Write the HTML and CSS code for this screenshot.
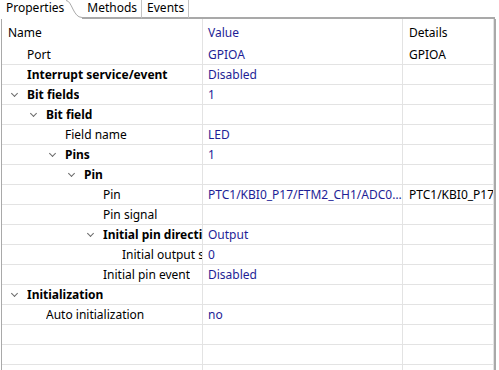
FILE: index.html
```html
<!DOCTYPE html>
<html>
<head>
<meta charset="utf-8">
<link rel="stylesheet" href="styles.css">
</head>
<body>
<div class="tabs">
  <div class="tab active">Properties</div>
  <svg class="curve" width="20" height="19" viewBox="0 0 20 19"><path d="M0 0.5 C6 0.5 7 17.5 16 17.5 L20 17.5" fill="none" stroke="#a9a9a9" stroke-width="1"/></svg>
  <div class="tab">Methods</div>
  <div class="tab">Events</div>
  <div class="tabfill"></div>
</div>
<div class="panel">
  <div class="row head">
    <div class="c name hn">Name</div>
    <div class="c val hv">Value</div>
    <div class="c det hd">Details</div>
  </div>
  <div class="row"><div class="c name l0"><span class="tw"></span><span class="t">Port</span></div><div class="c val">GPIOA</div><div class="c det">GPIOA</div></div>
  <div class="row"><div class="c name l0"><span class="tw"></span><span class="t b">Interrupt service/event</span></div><div class="c val">Disabled</div><div class="c det"></div></div>
  <div class="row"><div class="c name l0"><span class="tw open"></span><span class="t b">Bit fields</span></div><div class="c val">1</div><div class="c det"></div></div>
  <div class="row"><div class="c name l1"><span class="tw open"></span><span class="t b">Bit field</span></div><div class="c val"></div><div class="c det"></div></div>
  <div class="row"><div class="c name l2"><span class="tw"></span><span class="t">Field name</span></div><div class="c val">LED</div><div class="c det"></div></div>
  <div class="row"><div class="c name l2"><span class="tw open"></span><span class="t b">Pins</span></div><div class="c val">1</div><div class="c det"></div></div>
  <div class="row"><div class="c name l3"><span class="tw open"></span><span class="t b">Pin</span></div><div class="c val"></div><div class="c det"></div></div>
  <div class="row"><div class="c name l4"><span class="tw"></span><span class="t">Pin</span></div><div class="c val"><span class="t ell">PTC1/KBI0_P17/FTM2_CH1/ADC0_SE9</span></div><div class="c det"><span class="t">PTC1/KBI0_P17/FTM2_CH1/ADC0_SE9</span></div></div>
  <div class="row"><div class="c name l4"><span class="tw"></span><span class="t">Pin signal</span></div><div class="c val"></div><div class="c det"></div></div>
  <div class="row"><div class="c name l4"><span class="tw open"></span><span class="t b">Initial pin direction</span></div><div class="c val">Output</div><div class="c det"></div></div>
  <div class="row"><div class="c name l5"><span class="tw"></span><span class="t">Initial output state</span></div><div class="c val">0</div><div class="c det"></div></div>
  <div class="row"><div class="c name l4"><span class="tw"></span><span class="t">Initial pin event</span></div><div class="c val">Disabled</div><div class="c det"></div></div>
  <div class="row"><div class="c name l0"><span class="tw open"></span><span class="t b">Initialization</span></div><div class="c val"></div><div class="c det"></div></div>
  <div class="row"><div class="c name l1"><span class="tw"></span><span class="t">Auto initialization</span></div><div class="c val">no</div><div class="c det"></div></div>
  <div class="row"><div class="c name"></div><div class="c val"></div><div class="c det"></div></div>
  <div class="row"><div class="c name"></div><div class="c val"></div><div class="c det"></div></div>
  <div class="row"><div class="c name"></div><div class="c val"></div><div class="c det"></div></div>
</div>
</body>
</html>
```
FILE: styles.css
```css
html, body {
  margin: 0;
  padding: 0;
  background: #fff;
  height: 370px;
  overflow: hidden;
}
body {
  font-family: "Noto Sans", "Noto Sans CJK SC", sans-serif;
  font-size: 12px;
  color: #000;
}
.tabs {
  display: flex;
  height: 19px;
  align-items: stretch;
}
.tab {
  line-height: 16px;
  padding: 0 4px 0 5px;
  border-bottom: 2px solid #a9a9a9;
  border-right: 1px solid #c4c4c4;
  white-space: nowrap;
}
.tab.active {
  border-bottom: 2px solid transparent;
  border-right: none;
  padding: 0 2px 0 6px;
}
.curve {
  display: block;
  flex: none;
  margin-right: -4px;
}
.tabfill {
  flex: 1;
  border-bottom: 2px solid #a9a9a9;
  margin-right: 4px;
}
.panel {
  width: 492px;
  margin-left: 1px;
  border-left: 1px solid #a9a9a9;
  border-right: 2px solid #a9a9a9;
  height: 351px;
  overflow: hidden;
}
.row {
  display: grid;
  grid-template-columns: 201px 200px 91px;
  height: 20px;
  box-sizing: border-box;
}
.row.head {
  height: 26px;
}
.c {
  box-sizing: border-box;
  border-right: 1px solid #e3e3e3;
  border-bottom: 1px solid #e3e3e3;
  white-space: nowrap;
  overflow: hidden;
  line-height: 19px;
  display: flex;
  align-items: center;
  min-width: 0;
}
.row.head .c {
  border-bottom: none;
  line-height: 25px;
}
.hn { padding-left: 7px; }
.hv { padding-left: 5px; }
.hd { padding-left: 6px; }
.val {
  padding-left: 5px;
  color: #1e1e96;
}
.det {
  padding-left: 6px;
}
.name { padding-left: 6px; }
.name.l1 { padding-left: 25px; }
.name.l2 { padding-left: 44px; }
.name.l3 { padding-left: 63px; }
.name.l4 { padding-left: 82px; }
.name.l5 { padding-left: 101px; }
.tw {
  flex: none;
  width: 19px;
  height: 19px;
  position: relative;
}
.tw.open::before {
  content: "";
  position: absolute;
  left: 4px;
  top: 6px;
  width: 4px;
  height: 4px;
  border-right: 1px solid #6a6a6a;
  border-bottom: 1px solid #6a6a6a;
  transform: rotate(45deg);
}
.t {
  flex: 0 1 auto;
  min-width: 0;
  overflow: hidden;
  white-space: nowrap;
}
.ell {
  text-overflow: ellipsis;
}
.b {
  font-weight: bold;
}
```
